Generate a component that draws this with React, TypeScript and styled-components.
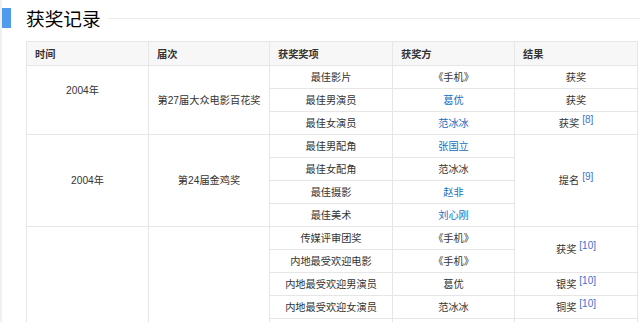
import React from 'react';
import styled, { createGlobalStyle } from 'styled-components';

const GlobalStyle = createGlobalStyle`
  html, body { margin: 0; padding: 0; background: #fff; }
  body { font-family: "Liberation Sans", Arial, "Noto Sans CJK SC", sans-serif; }
`;

const Page = styled.div`
  height: 322px;
  overflow: hidden;
  box-sizing: border-box;
  border-left: 2px solid #f0f0f0;
  padding-top: 8px;
`;

const TitleBar = styled.div`
  display: flex;
  align-items: center;
  height: 20px;
`;

const Accent = styled.span`
  flex: none;
  width: 9px;
  height: 20px;
  background: #4f9cee;
`;

const Title = styled.h2`
  margin: 0 0 0 15px;
  font-family: "Noto Sans CJK SC", sans-serif;
  font-size: 18.7px;
  font-weight: normal;
  line-height: 20px;
  color: #000;
`;

const Rule = styled.span`
  flex: 1;
  height: 1px;
  margin-left: 7px;
  background: #ebebeb;
`;

const Table = styled.table`
  margin: 13px 0 0 24px;
  width: 611px;
  border-collapse: collapse;
  table-layout: fixed;
  font-size: 10.2px;
  color: #333;
`;

const Col = styled.col<{ $w: number }>`
  width: ${(p) => p.$w}px;
`;

const HeadRow = styled.tr`
  height: 24px;
`;

const Row = styled.tr`
  height: 23px;
`;

const Th = styled.th`
  padding: 0 8px;
  border: 1px solid #e6e6e6;
  background: #f7f7f7;
  text-align: left;
  font-weight: bold;
  color: #333;
`;

const Td = styled.td<{ $padBottom?: number; $padRight?: number }>`
  padding: 1px ${(p) => 8 + (p.$padRight ?? 0)}px ${(p) => p.$padBottom ?? 0}px 8px;
  border: 1px solid #e6e6e6;
  text-align: center;
  vertical-align: middle;
  line-height: 18px;
`;

const Link = styled.a`
  color: #136ec2;
  text-decoration: none;
`;

const Ref = styled.sup`
  margin-left: 3px;
  font-size: 10px;
  line-height: 0;
  vertical-align: 4px;
  color: #4070d0;
`;

type Cell = { text: string; link?: boolean };

const Winner = ({ c }: { c: Cell }) =>
  c.link ? <Link href="#">{c.text}</Link> : <>{c.text}</>;

export default function App() {
  return (
    <>
      <GlobalStyle />
      <Page>
        <TitleBar>
          <Accent />
          <Title>获奖记录</Title>
          <Rule />
        </TitleBar>
        <Table>
          <colgroup>
            <Col $w={122} />
            <Col $w={121} />
            <Col $w={123} />
            <Col $w={122} />
            <Col $w={123} />
          </colgroup>
          <thead>
            <HeadRow>
              <Th>时间</Th>
              <Th>届次</Th>
              <Th>获奖奖项</Th>
              <Th>获奖方</Th>
              <Th>结果</Th>
            </HeadRow>
          </thead>
          <tbody>
            <Row>
              <Td rowSpan={3} $padBottom={19} $padRight={10}>2004年</Td>
              <Td rowSpan={3}>第27届大众电影百花奖</Td>
              <Td>最佳影片</Td>
              <Td>《手机》</Td>
              <Td>获奖</Td>
            </Row>
            <Row>
              <Td>最佳男演员</Td>
              <Td><Winner c={{ text: '葛优', link: true }} /></Td>
              <Td>获奖</Td>
            </Row>
            <Row>
              <Td>最佳女演员</Td>
              <Td><Winner c={{ text: '范冰冰', link: true }} /></Td>
              <Td>获奖<Ref>[8]</Ref></Td>
            </Row>
            <Row>
              <Td rowSpan={4}>2004年</Td>
              <Td rowSpan={4}>第24届金鸡奖</Td>
              <Td>最佳男配角</Td>
              <Td><Winner c={{ text: '张国立', link: true }} /></Td>
              <Td rowSpan={4}>提名<Ref>[9]</Ref></Td>
            </Row>
            <Row>
              <Td>最佳女配角</Td>
              <Td>范冰冰</Td>
            </Row>
            <Row>
              <Td>最佳摄影</Td>
              <Td><Winner c={{ text: '赵非', link: true }} /></Td>
            </Row>
            <Row>
              <Td>最佳美术</Td>
              <Td><Winner c={{ text: '刘心刚', link: true }} /></Td>
            </Row>
            <Row>
              <Td rowSpan={5} />
              <Td rowSpan={5} />
              <Td>传媒评审团奖</Td>
              <Td>《手机》</Td>
              <Td rowSpan={2}>获奖<Ref>[10]</Ref></Td>
            </Row>
            <Row>
              <Td>内地最受欢迎电影</Td>
              <Td>《手机》</Td>
            </Row>
            <Row>
              <Td>内地最受欢迎男演员</Td>
              <Td>葛优</Td>
              <Td>银奖<Ref>[10]</Ref></Td>
            </Row>
            <Row>
              <Td>内地最受欢迎女演员</Td>
              <Td>范冰冰</Td>
              <Td>铜奖<Ref>[10]</Ref></Td>
            </Row>
            <Row>
              <Td />
              <Td />
              <Td />
            </Row>
          </tbody>
        </Table>
      </Page>
    </>
  );
}
